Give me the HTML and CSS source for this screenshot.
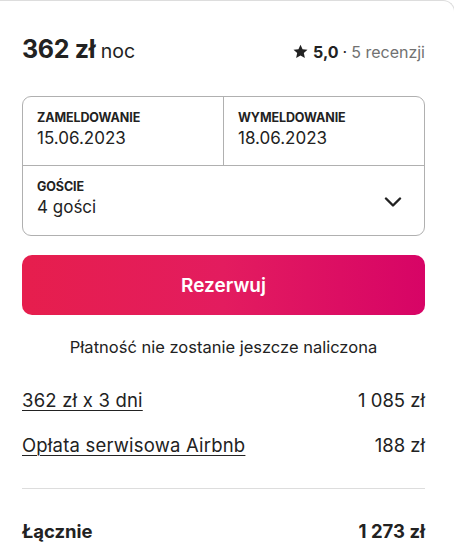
FILE: index.html
```html
<!DOCTYPE html>
<html lang="pl">
<head>
  <meta charset="UTF-8">
  <meta name="viewport" content="width=device-width, initial-scale=1.0">
  <title>Rezerwacja</title>
  <link rel="stylesheet" href="styles.css">
</head>
<body>
  <div class="card">
    <div class="header">
      <div class="price"><strong>362 zł</strong> <span>noc</span></div>
      <div class="rating">
        <svg class="star" viewBox="0 0 32 32" width="15" height="15"><path d="M16 1.5l4.4 9.6 10.5 1.2-7.8 7.1 2.2 10.3L16 24.4l-9.3 5.3 2.2-10.3-7.8-7.1 10.5-1.2z" fill="#222"/></svg>
        <strong>5,0</strong><span class="dot">·</span><span class="reviews">5 recenzji</span>
      </div>
    </div>

    <div class="picker">
      <div class="dates">
        <div class="cell">
          <div class="label">Zameldowanie</div>
          <div class="value">15.06.2023</div>
        </div>
        <div class="cell">
          <div class="label">Wymeldowanie</div>
          <div class="value">18.06.2023</div>
        </div>
      </div>
      <div class="guests">
        <div>
          <div class="label">Goście</div>
          <div class="value">4 gości</div>
        </div>
        <svg class="chevron" viewBox="0 0 18 10" width="18" height="10"><path d="M2 1.5l7 7 7-7" fill="none" stroke="#222" stroke-width="2.4" stroke-linecap="round" stroke-linejoin="round"/></svg>
      </div>
    </div>

    <button class="reserve">Rezerwuj</button>
    <p class="note">Płatność nie zostanie jeszcze naliczona</p>

    <div class="line">
      <a href="#">362 zł x 3 dni</a>
      <span>1 085 zł</span>
    </div>
    <div class="line">
      <a href="#">Opłata serwisowa Airbnb</a>
      <span>188 zł</span>
    </div>

    <div class="total">
      <span>Łącznie</span>
      <span>1 273 zł</span>
    </div>
  </div>
</body>
</html>
```

FILE: styles.css
```css
body {
  margin: 0;
  padding: 0;
  overflow: hidden;
  font-family: Inter, "Noto Sans", sans-serif;
  color: #222;
  background: #fff;
}
.card {
  box-sizing: border-box;
  width: 455px;
  min-height: 100vh;
  padding: 33px 29px 0 22px;
  border: 1px solid #ddd;
  border-left: none;
  border-bottom: none;
  border-radius: 0 12px 0 0;
}
.header {
  display: flex;
  justify-content: space-between;
  align-items: baseline;
  line-height: 30px;
}
.price strong {
  font-size: 25px;
  font-weight: 700;
  letter-spacing: -0.3px;
}
.price span {
  font-size: 19.5px;
  margin-left: 1px;
}
.rating {
  font-size: 16px;
  display: flex;
  align-items: baseline;
}
.star {
  margin-right: 5px;
  position: relative;
  top: 1px;
}
.rating strong {
  font-weight: 700;
}
.dot {
  margin: 0 4px;
  color: #222;
}
.reviews {
  color: #717171;
}
.picker {
  margin-top: 29px;
  border: 1px solid #b0b0b0;
  border-radius: 9px;
}
.dates {
  display: flex;
  height: 68px;
  border-bottom: 1px solid #b0b0b0;
}
.cell {
  flex: 1;
  padding: 13px 14px 0;
}
.cell + .cell {
  border-left: 1px solid #b0b0b0;
}
.label {
  font-size: 12.5px;
  font-weight: 700;
  text-transform: uppercase;
  line-height: 16px;
  letter-spacing: -0.1px;
}
.value {
  font-size: 17px;
  line-height: 25px;
}
.guests {
  height: 69px;
  box-sizing: border-box;
  padding: 13px 22px 0 14px;
  display: flex;
  justify-content: space-between;
  align-items: center;
}
.guests > div {
  align-self: flex-start;
}
.chevron {
  margin-top: -10px;
}
.reserve {
  display: block;
  width: 100%;
  height: 60px;
  margin-top: 19px;
  border: none;
  border-radius: 10px;
  background: linear-gradient(to right, #e61e4d 0%, #e31c5f 50%, #d70466 100%);
  color: #fff;
  font-family: inherit;
  font-size: 19px;
  font-weight: 600;
  cursor: pointer;
}
.note {
  margin: 21px 0 0;
  text-align: center;
  font-size: 16.5px;
  line-height: 22px;
}
.line {
  display: flex;
  justify-content: space-between;
  font-size: 18.5px;
  line-height: 24px;
  margin-top: 30px;
}
.line + .line {
  margin-top: 21px;
}
.line a {
  color: #222;
  letter-spacing: 0.2px;
  text-decoration: underline;
  text-underline-offset: 3px;
  text-decoration-thickness: 1px;
}
.total {
  display: flex;
  justify-content: space-between;
  font-size: 18.5px;
  font-weight: 700;
  line-height: 24px;
  margin-top: 31px;
  padding-top: 30px;
  border-top: 1px solid #ddd;
}
```
